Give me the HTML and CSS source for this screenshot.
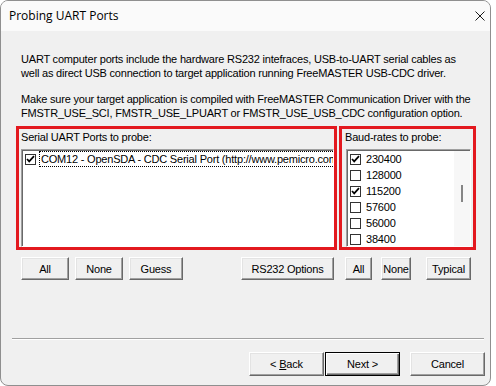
FILE: index.html
```html
<!DOCTYPE html>
<html lang="en">
<head>
  <meta charset="UTF-8">
  <title>Probing UART Ports</title>
  <link rel="stylesheet" href="styles.css">
</head>
<body>
  <div class="dialog">
    <!-- Title bar -->
    <div class="titlebar">
      <span class="title">Probing UART Ports</span>
      <svg class="close" width="10" height="10" viewBox="0 0 10 10">
        <path d="M0.5 0.5 L9.5 9.5 M9.5 0.5 L0.5 9.5" stroke="#1a1a1a" stroke-width="1" fill="none"/>
      </svg>
    </div>

    <div class="content">
      <!-- Intro text -->
      <div class="intro">
        <p>UART computer ports include the hardware RS232 intefraces, USB-to-UART serial cables as<br>well as direct USB connection to target application running FreeMASTER USB-CDC driver.</p>
        <p>Make sure your target application is compiled with FreeMASTER Communication Driver with the<br>FMSTR_USE_SCI, FMSTR_USE_LPUART or FMSTR_USE_USB_CDC configuration option.</p>
      </div>

      <!-- Groups -->
      <div class="groups">
        <div class="group ports">
          <div class="group-label">Serial UART Ports to probe:</div>
          <div class="listbox">
            <div class="item">
              <span class="check"><svg width="9" height="9" viewBox="0 0 9 9"><path d="M1 4 L3.2 6.4 L8 1.2" stroke="#000" stroke-width="1.7" fill="none"/></svg></span>
              <span class="item-text focus">COM12 - OpenSDA - CDC Serial Port (http://www.pemicro.com/opensda)</span>
            </div>
          </div>
        </div>
        <div class="group bauds">
          <div class="group-label">Baud-rates to probe:</div>
          <div class="listbox baud-list">
            <div class="baud-items">
              <div class="item"><span class="check"><svg width="9" height="9" viewBox="0 0 9 9"><path d="M1 4 L3.2 6.4 L8 1.2" stroke="#000" stroke-width="1.7" fill="none"/></svg></span><span class="item-text">230400</span></div>
              <div class="item"><span class="check"></span><span class="item-text">128000</span></div>
              <div class="item"><span class="check"><svg width="9" height="9" viewBox="0 0 9 9"><path d="M1 4 L3.2 6.4 L8 1.2" stroke="#000" stroke-width="1.7" fill="none"/></svg></span><span class="item-text">115200</span></div>
              <div class="item"><span class="check"></span><span class="item-text">57600</span></div>
              <div class="item"><span class="check"></span><span class="item-text">56000</span></div>
              <div class="item"><span class="check"></span><span class="item-text">38400</span></div>
            </div>
            <div class="scrollbar"><div class="thumb"></div></div>
          </div>
        </div>
      </div>

      <!-- Group buttons -->
      <div class="actions">
        <div class="actions-left">
          <button class="btn w48">All</button>
          <button class="btn w48">None</button>
          <button class="btn w54">Guess</button>
          <button class="btn w93 push-right">RS232 Options</button>
        </div>
        <div class="actions-right">
          <button class="btn w27">All</button>
          <button class="btn w30">None</button>
          <button class="btn w45">Typical</button>
        </div>
      </div>

      <div class="separator"></div>

      <!-- Wizard buttons -->
      <div class="footer">
        <button class="btn wide"><u>&lt;</u> <u>B</u>ack</button>
        <button class="btn wide default"><u>N</u>ext &gt;</button>
        <button class="btn wide cancel">Cancel</button>
      </div>
    </div>
  </div>
</body>
</html>
```

FILE: styles.css
```css
html, body {
  margin: 0;
  padding: 0;
  background-color: #ffffff;
}
body {
  font-family: "Liberation Sans", Arial, sans-serif;
  font-size: 11px;
  letter-spacing: -0.2px;
  color: #000;
}
.dialog {
  box-sizing: border-box;
  width: 491px;
  height: 386px;
  border: 1px solid #8f8f8f;
  border-radius: 8px;
  overflow: hidden;
  background-color: #f0f0f0;
  display: flex;
  flex-direction: column;
}
.titlebar {
  height: 30px;
  flex: none;
  background-color: #fafafa;
  display: flex;
  align-items: center;
  justify-content: space-between;
  padding: 0 5px 0 8px;
}
.title {
  font-family: "Open Sans", "Noto Sans", sans-serif;
  font-size: 12px;
  letter-spacing: 0;
  color: #000;
  margin-top: -1px;
}
.close {
  margin-top: -1px;
}
.content {
  padding: 0 0 0 15px;
}
.intro {
  margin: 21px 0 0 5px;
}
.intro p {
  margin: 0 0 12px 0;
  line-height: 14px;
  white-space: nowrap;
}
.intro p:last-child {
  margin-bottom: 6px;
}
.groups {
  display: flex;
  gap: 2px;
}
.group {
  box-sizing: border-box;
  height: 124px;
  border: 3px solid #e3191f;
  display: flex;
  flex-direction: column;
}
.ports {
  width: 321px;
  padding: 1px 0 0 2px;
}
.bauds {
  width: 137px;
  padding: 1px 2px 0 3px;
}
.group-label {
  line-height: 14px;
  margin-bottom: 5px;
}
.listbox {
  flex: 1;
  background-color: #fff;
  border-top: 1px solid #a0a0a0;
  border-left: 1px solid #a0a0a0;
  border-right: 1px solid #fff;
  border-bottom: 1px solid #fff;
  box-shadow: inset 1px 1px 0 #696969;
  padding: 1px 0 0 2px;
  overflow: hidden;
}
.baud-list {
  margin-left: 1px;
  display: flex;
  padding-right: 0;
}
.baud-items {
  flex: 1;
}
.item {
  height: 16px;
  display: flex;
  align-items: center;
  white-space: nowrap;
}
.check {
  box-sizing: border-box;
  width: 11px;
  height: 11px;
  flex: none;
  border: 1px solid #333;
  background-color: #fff;
  margin: 0 3px 0 1px;
  display: flex;
  align-items: center;
  justify-content: center;
}
.item-text {
  line-height: 14px;
  padding: 0 1px;
  border: 1px solid transparent;
}
.item-text.focus {
  flex: 1 1 auto;
  min-width: 0;
  overflow: hidden;
  border: 1px dotted #000;
  border-right: none;
}
.scrollbar {
  width: 16px;
  background-color: #f7f7f7;
  position: relative;
}
.thumb {
  position: absolute;
  left: 7px;
  top: 34px;
  width: 2px;
  height: 17px;
  background-color: #858585;
}
.actions {
  display: flex;
  gap: 2px;
  margin-top: 7px;
}
.actions-left {
  width: 321px;
  display: flex;
  gap: 6px;
  padding-left: 5px;
  box-sizing: border-box;
}
.actions-right {
  width: 137px;
  display: flex;
  padding-left: 6px;
  box-sizing: border-box;
}
.actions-right .btn + .btn {
  margin-left: 9px;
}
.actions-right .btn:last-child {
  margin-left: 15px;
}
.push-right {
  margin-left: auto;
}
.btn {
  box-sizing: border-box;
  height: 23px;
  padding: 0;
  font-family: "Liberation Sans", Arial, sans-serif;
  font-size: 11px;
  letter-spacing: -0.2px;
  color: #000;
  background-color: #f0f0f0;
  border-top: 1px solid #fff;
  border-left: 1px solid #fff;
  border-right: 1px solid #696969;
  border-bottom: 1px solid #696969;
  box-shadow: inset -1px -1px 0 #a0a0a0, inset 1px 1px 0 #e3e3e3;
  border-radius: 0;
}
.w48 { width: 48px; }
.w54 { width: 54px; }
.w93 { width: 93px; margin-right: 3px; }
.w27 { width: 27px; }
.w30 { width: 30px; }
.w45 { width: 45px; }
.btn u {
  text-decoration: underline;
}
.btn u:first-child {
  text-decoration: none;
}
.separator {
  margin: 58px 6px 0 -4px;
  height: 1px;
  border-top: 1px solid #a0a0a0;
  background-color: #fff;
}
.footer {
  display: flex;
  justify-content: flex-end;
  margin-top: 12px;
  padding-right: 5px;
}
.wide {
  width: 75px;
  height: 24px;
}
.default {
  margin-left: 1px;
  border: 1px solid #000;
  box-shadow: inset 1px 1px 0 #fff, inset -1px -1px 0 #696969, inset -2px -2px 0 #a0a0a0;
}
.cancel {
  margin-left: 10px;
}
```
